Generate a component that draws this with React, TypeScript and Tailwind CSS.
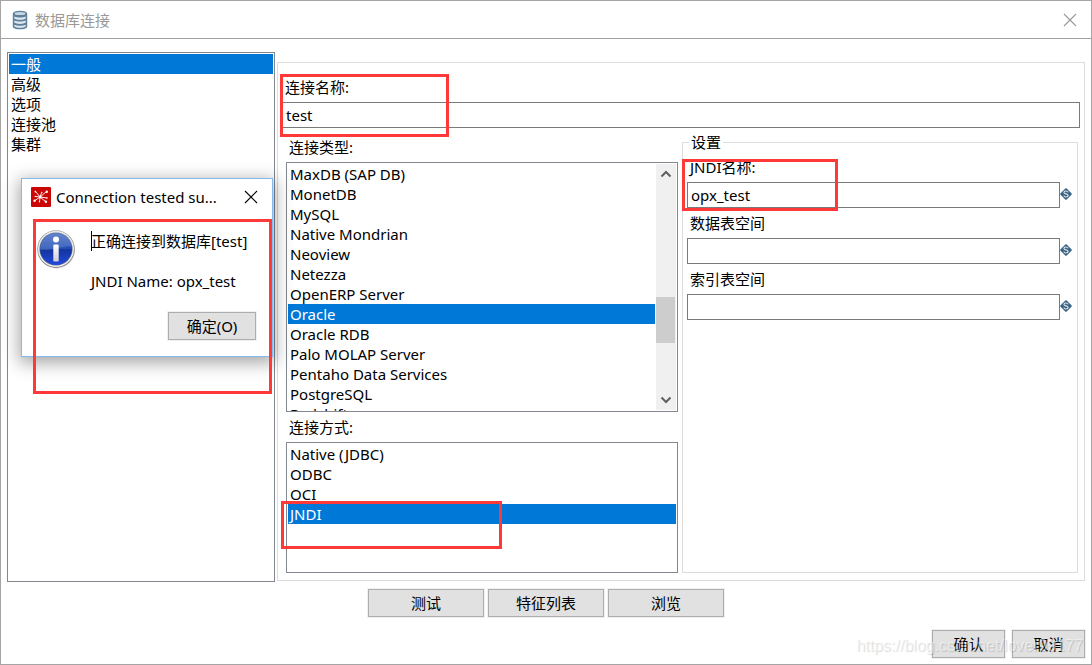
import { useState } from "react";
import type { ReactNode } from "react";

const pages = ["一般", "高级", "选项", "连接池", "集群"];

const databases = [
  "MaxDB (SAP DB)",
  "MonetDB",
  "MySQL",
  "Native Mondrian",
  "Neoview",
  "Netezza",
  "OpenERP Server",
  "Oracle",
  "Oracle RDB",
  "Palo MOLAP Server",
  "Pentaho Data Services",
  "PostgreSQL",
  "Redshift",
];

const accessMethods = ["Native (JDBC)", "ODBC", "OCI", "JNDI"];

function DatabaseIcon() {
  return (
    <svg className="h-5 w-4" viewBox="0 0 16 20" aria-hidden="true">
      <path d="M0.8 3.6v12.8C0.8 18.2 4 19.3 8 19.3s7.2-1.1 7.2-2.9V3.6z" fill="#5d809c" />
      <ellipse cx="8" cy="3.6" rx="7.2" ry="2.9" fill="#5d809c" />
      <ellipse cx="8" cy="3.4" rx="5.4" ry="1.5" fill="#c9d7e2" />
      <g fill="#dfe8ef">
        <path d="M2.3 6.4c1.5.8 3.5 1 5.7 1s4.2-.2 5.7-1v2c-1 .9-3.3 1.3-5.7 1.3s-4.7-.4-5.7-1.3z" />
        <path d="M2.3 10.6c1.5.8 3.5 1 5.7 1s4.2-.2 5.7-1v2c-1 .9-3.3 1.3-5.7 1.3s-4.7-.4-5.7-1.3z" />
        <path d="M2.3 14.8c1.5.8 3.5 1 5.7 1s4.2-.2 5.7-1v1.6c-1 .9-3.3 1.3-5.7 1.3s-4.7-.4-5.7-1.3z" />
      </g>
    </svg>
  );
}

function CrossIcon() {
  return (
    <svg className="h-3.5 w-3.5" viewBox="0 0 14 14" fill="none" stroke="currentColor" strokeWidth="1.1" aria-hidden="true">
      <path d="M1 1l12 12M13 1L1 13" />
    </svg>
  );
}

function VariableIcon() {
  return (
    <svg className="mb-0.5 h-3 w-3 shrink-0" viewBox="0 0 12 12" aria-hidden="true">
      <path
        d="M6 1.3L10.7 6 6 10.7 1.3 6z"
        fill="#3f6584"
        stroke="#3f6584"
        strokeLinejoin="round"
        strokeWidth="2.2"
      />
      <path
        d="M8.1 4.2C7.7 3.2 6.9 3 6 3c-1.1 0-2 .5-2 1.4C4 6.4 8.1 5.5 8.1 7.6c0 .9-1 1.4-2.1 1.4-1 0-1.900-.3-2.200-1.300"
        fill="none"
        stroke="#d3dfe8"
        strokeWidth="1.2"
      />
    </svg>
  );
}

function SpoonIcon() {
  return (
    <svg className="h-5 w-5 shrink-0" viewBox="0 0 20 20" aria-hidden="true">
      <rect width="20" height="20" rx="1" fill="#cc0505" />
      <g stroke="#fff" strokeWidth="0.9" fill="none">
        <path d="M9 10L5 5M9 10l1.5-4M9 10l6-5M9 10l7 1M9 10l5.5 4.5M9 10l-.5 4.5M9 10l-5 3.5M9 10l-4.5-.5" />
      </g>
      <g fill="#fff">
        <circle cx="9.2" cy="10" r="1.4" />
        <circle cx="4.4" cy="4.6" r="0.9" />
        <circle cx="10.8" cy="5.4" r="0.7" />
        <circle cx="15.8" cy="4.8" r="1.2" />
        <circle cx="16" cy="11" r="0.8" />
        <circle cx="14.9" cy="14.8" r="1.2" />
        <circle cx="8.5" cy="14.8" r="0.7" />
        <circle cx="3.6" cy="13.8" r="1.2" />
        <circle cx="4.2" cy="9.4" r="0.7" />
      </g>
    </svg>
  );
}

function InfoIcon() {
  return (
    <svg className="h-10 w-10 shrink-0" viewBox="0 0 40 40" aria-hidden="true">
      <defs>
        <linearGradient id="ball" x1="0" y1="0" x2="0" y2="1">
          <stop offset="0" stopColor="#4a6fc4" />
          <stop offset="0.48" stopColor="#2450b4" />
          <stop offset="0.52" stopColor="#12359f" />
          <stop offset="1" stopColor="#2248d8" />
        </linearGradient>
        <linearGradient id="rim" x1="0" y1="0" x2="0" y2="1">
          <stop offset="0" stopColor="#a5a5a5" />
          <stop offset="1" stopColor="#6c6c6c" />
        </linearGradient>
        <linearGradient id="stem" x1="0" y1="0" x2="0" y2="1">
          <stop offset="0" stopColor="#ffffff" />
          <stop offset="1" stopColor="#cfcfd4" />
        </linearGradient>
      </defs>
      <circle cx="20.5" cy="21" r="18.5" fill="#000" opacity="0.18" />
      <circle cx="20" cy="20" r="18.7" fill="url(#rim)" />
      <circle cx="20" cy="20" r="18" fill="#ededed" />
      <circle cx="20" cy="20" r="16.6" fill="#6c7690" />
      <circle cx="20" cy="20" r="16" fill="url(#ball)" />
      <path d="M4.2 21C4 11 11 4.2 20 4.2S35.5 10 35.8 17C28 16 18 22 4.2 21z" fill="#fff" opacity="0.14" />
      <circle cx="20" cy="10.5" r="3" fill="#fff" />
      <rect x="17.3" y="15.5" width="5.4" height="17" rx="1.2" fill="url(#stem)" />
    </svg>
  );
}

function Chevron({ up = false }: { up?: boolean }) {
  return (
    <svg className="h-2 w-3" viewBox="0 0 12 8" fill="none" stroke="#606060" strokeWidth="2" aria-hidden="true">
      <path d={up ? "M1.5 6.5L6 2l4.5 4.5" : "M1.5 1.5L6 6l4.5-4.5"} />
    </svg>
  );
}

function Options({ label, items, initial }: { label: string; items: string[]; initial: string }) {
  const [selected, setSelected] = useState(initial);
  return (
    <ul role="listbox" aria-label={label} className="min-w-0 flex-1">
      {items.map((item) => (
        <li
          key={item}
          role="option"
          aria-selected={item === selected}
          onClick={() => setSelected(item)}
          className={
            item === selected
              ? "h-5 cursor-default whitespace-nowrap bg-[#0078d7] pl-0.5 text-white"
              : "h-5 cursor-default whitespace-nowrap pl-0.5"
          }
        >
          {item}
        </li>
      ))}
    </ul>
  );
}

function PushButton({ children, size }: { children: ReactNode; size: "wide" | "medium" | "narrow" }) {
  const width = { wide: "w-29", medium: "w-22", narrow: "w-[73px]" }[size];
  return (
    <button
      type="button"
      className={`${width} h-7 border border-[#adadad] bg-[#e1e1e1] text-center outline-1 outline-[#f0f0f0] hover:border-[#0078d7] hover:bg-[#e5f1fb]`}
    >
      {children}
    </button>
  );
}

function SettingField({ id, label, value }: { id: string; label: string; value?: string }) {
  return (
    <div className="mt-[5px]">
      <label htmlFor={id} className="mb-[5px] block pl-[3px]">
        {label}
      </label>
      <div className="flex items-center">
        <input
          id={id}
          type="text"
          defaultValue={value}
          className="h-[26px] min-w-0 flex-1 border border-[#7a7a7a] bg-white pl-[3px] outline-none"
        />
        <VariableIcon />
      </div>
    </div>
  );
}

function TestResultDialog() {
  return (
    <div
      role="dialog"
      aria-labelledby="result-title"
      className="absolute top-[125px] left-[13px] w-[252px] border border-[#83b9ec] bg-white pb-4 shadow-[0_4px_16px_2px_rgba(0,0,0,0.35)]"
    >
      <header className="flex h-9 items-center pr-3.5 pl-[9px]">
        <SpoonIcon />
        <h2 id="result-title" className="ml-[5px] flex-1 truncate">
          Connection tested su...
        </h2>
        <button type="button" aria-label="关闭提示">
          <CrossIcon />
        </button>
      </header>
      <div className="mt-3.5 flex gap-[15px] pl-3.5">
        <InfoIcon />
        <div className="pt-0.5">
          <p className="relative">
            <span className="absolute top-0 left-0 h-5 w-px bg-black" />
            正确连接到数据库[test]
          </p>
          <p className="mt-5">JNDI Name: opx_test</p>
        </div>
      </div>
      <div className="mt-[21px] flex justify-end pr-4">
        <PushButton size="medium">确定(O)</PushButton>
      </div>
      <span className="pointer-events-none absolute top-10 right-0 h-[175px] w-[239px] border-3 border-[#ff3838]" />
    </div>
  );
}

export default function App() {
  return (
    <div className="flex min-h-screen flex-col border border-[#a5a5a5] bg-white font-['Noto_Sans','Noto_Sans_CJK_SC',sans-serif] text-[15px] leading-5 text-black">
      <header className="flex h-[38px] items-center border-b border-[#a0a0a0] pr-3.5 pl-[11px] text-[#999]">
        <DatabaseIcon />
        <h1 className="ml-[7px] flex-1">数据库连接</h1>
        <button type="button" aria-label="关闭">
          <CrossIcon />
        </button>
      </header>

      <main className="flex flex-1 gap-0.5 px-1.5 pt-[13px]">
        <nav className="relative z-10 w-[268px] shrink-0 border border-[#828790] p-px">
          <Options label="页面" items={pages} initial="一般" />
          <TestResultDialog />
        </nav>

        <section className="mt-2.5 mb-px flex min-w-0 flex-1 flex-col border border-[#dcdcdc] px-1 pt-3.5 pb-[7px]">
          <div className="relative">
            <label htmlFor="connection-name" className="mb-[5px] block pl-[3px]">
              连接名称:
            </label>
            <input
              id="connection-name"
              type="text"
              defaultValue="test"
              className="block h-[26px] w-full border border-[#7a7a7a] bg-white pl-[3px] outline-none"
            />
            <span className="pointer-events-none absolute -top-[3px] -left-0.5 h-[63px] w-[169px] border-3 border-[#ff3838]" />
          </div>

          <div className="grid flex-1 grid-cols-[98fr_99fr] gap-1 pr-0.5 pl-1">
            <div className="flex min-w-0 flex-col pt-[9px]">
              <p className="mb-[5px] pl-[3px]">连接类型:</p>
              <div className="flex h-[250px] overflow-hidden border border-[#828790] p-px">
                <Options label="连接类型" items={databases} initial="Oracle" />
                <div className="ml-px flex w-5 flex-col items-center bg-[#f0f0f0]">
                  <button type="button" aria-label="向上滚动" className="flex h-5 w-full shrink-0 items-center justify-center">
                    <Chevron up />
                  </button>
                  <div className="flex w-full flex-1 flex-col">
                    <div className="flex-[113]" />
                    <div className="h-[46px] w-[19px] bg-[#cdcdcd]" />
                    <div className="flex-[47]" />
                  </div>
                  <button type="button" aria-label="向下滚动" className="flex h-5 w-full shrink-0 items-center justify-center">
                    <Chevron />
                  </button>
                </div>
              </div>
              <p className="my-[5px] pl-[3px]">连接方式:</p>
              <div className="relative flex min-h-[84px] flex-1 border border-[#828790] p-px">
                <Options label="连接方式" items={accessMethods} initial="JNDI" />
                <span className="pointer-events-none absolute top-[58px] -left-1.5 h-12 w-[221px] border-3 border-[#ff3838]" />
              </div>
            </div>

            <fieldset className="relative mt-1 min-w-0 border border-[#dcdcdc] pr-[5px] pl-1">
              <legend className="ml-0.5 px-0.5">设置</legend>
              <SettingField id="jndi-name" label="JNDI名称:" value="opx_test" />
              <SettingField id="data-space" label="数据表空间" />
              <SettingField id="index-space" label="索引表空间" />
              <span className="pointer-events-none absolute top-[7px] -left-px h-[52px] w-[156px] border-3 border-[#ff3838]" />
            </fieldset>
          </div>
        </section>
      </main>

      <div className="mt-[7px] flex justify-center gap-1">
        <PushButton size="wide">测试</PushButton>
        <PushButton size="wide">特征列表</PushButton>
        <PushButton size="wide">浏览</PushButton>
      </div>

      <footer className="relative mt-[13px] flex justify-end gap-[7px] pr-1.5 pb-1.5">
        <PushButton size="narrow">确认</PushButton>
        <PushButton size="narrow">取消</PushButton>
        <span className="pointer-events-none absolute right-2 bottom-1.5 font-['Liberation_Sans',sans-serif] text-base text-white/50 [text-shadow:1px_1px_1px_rgba(0,0,0,0.15)]">
          https://blog.csdn.net/lover99177
        </span>
      </footer>
    </div>
  );
}
